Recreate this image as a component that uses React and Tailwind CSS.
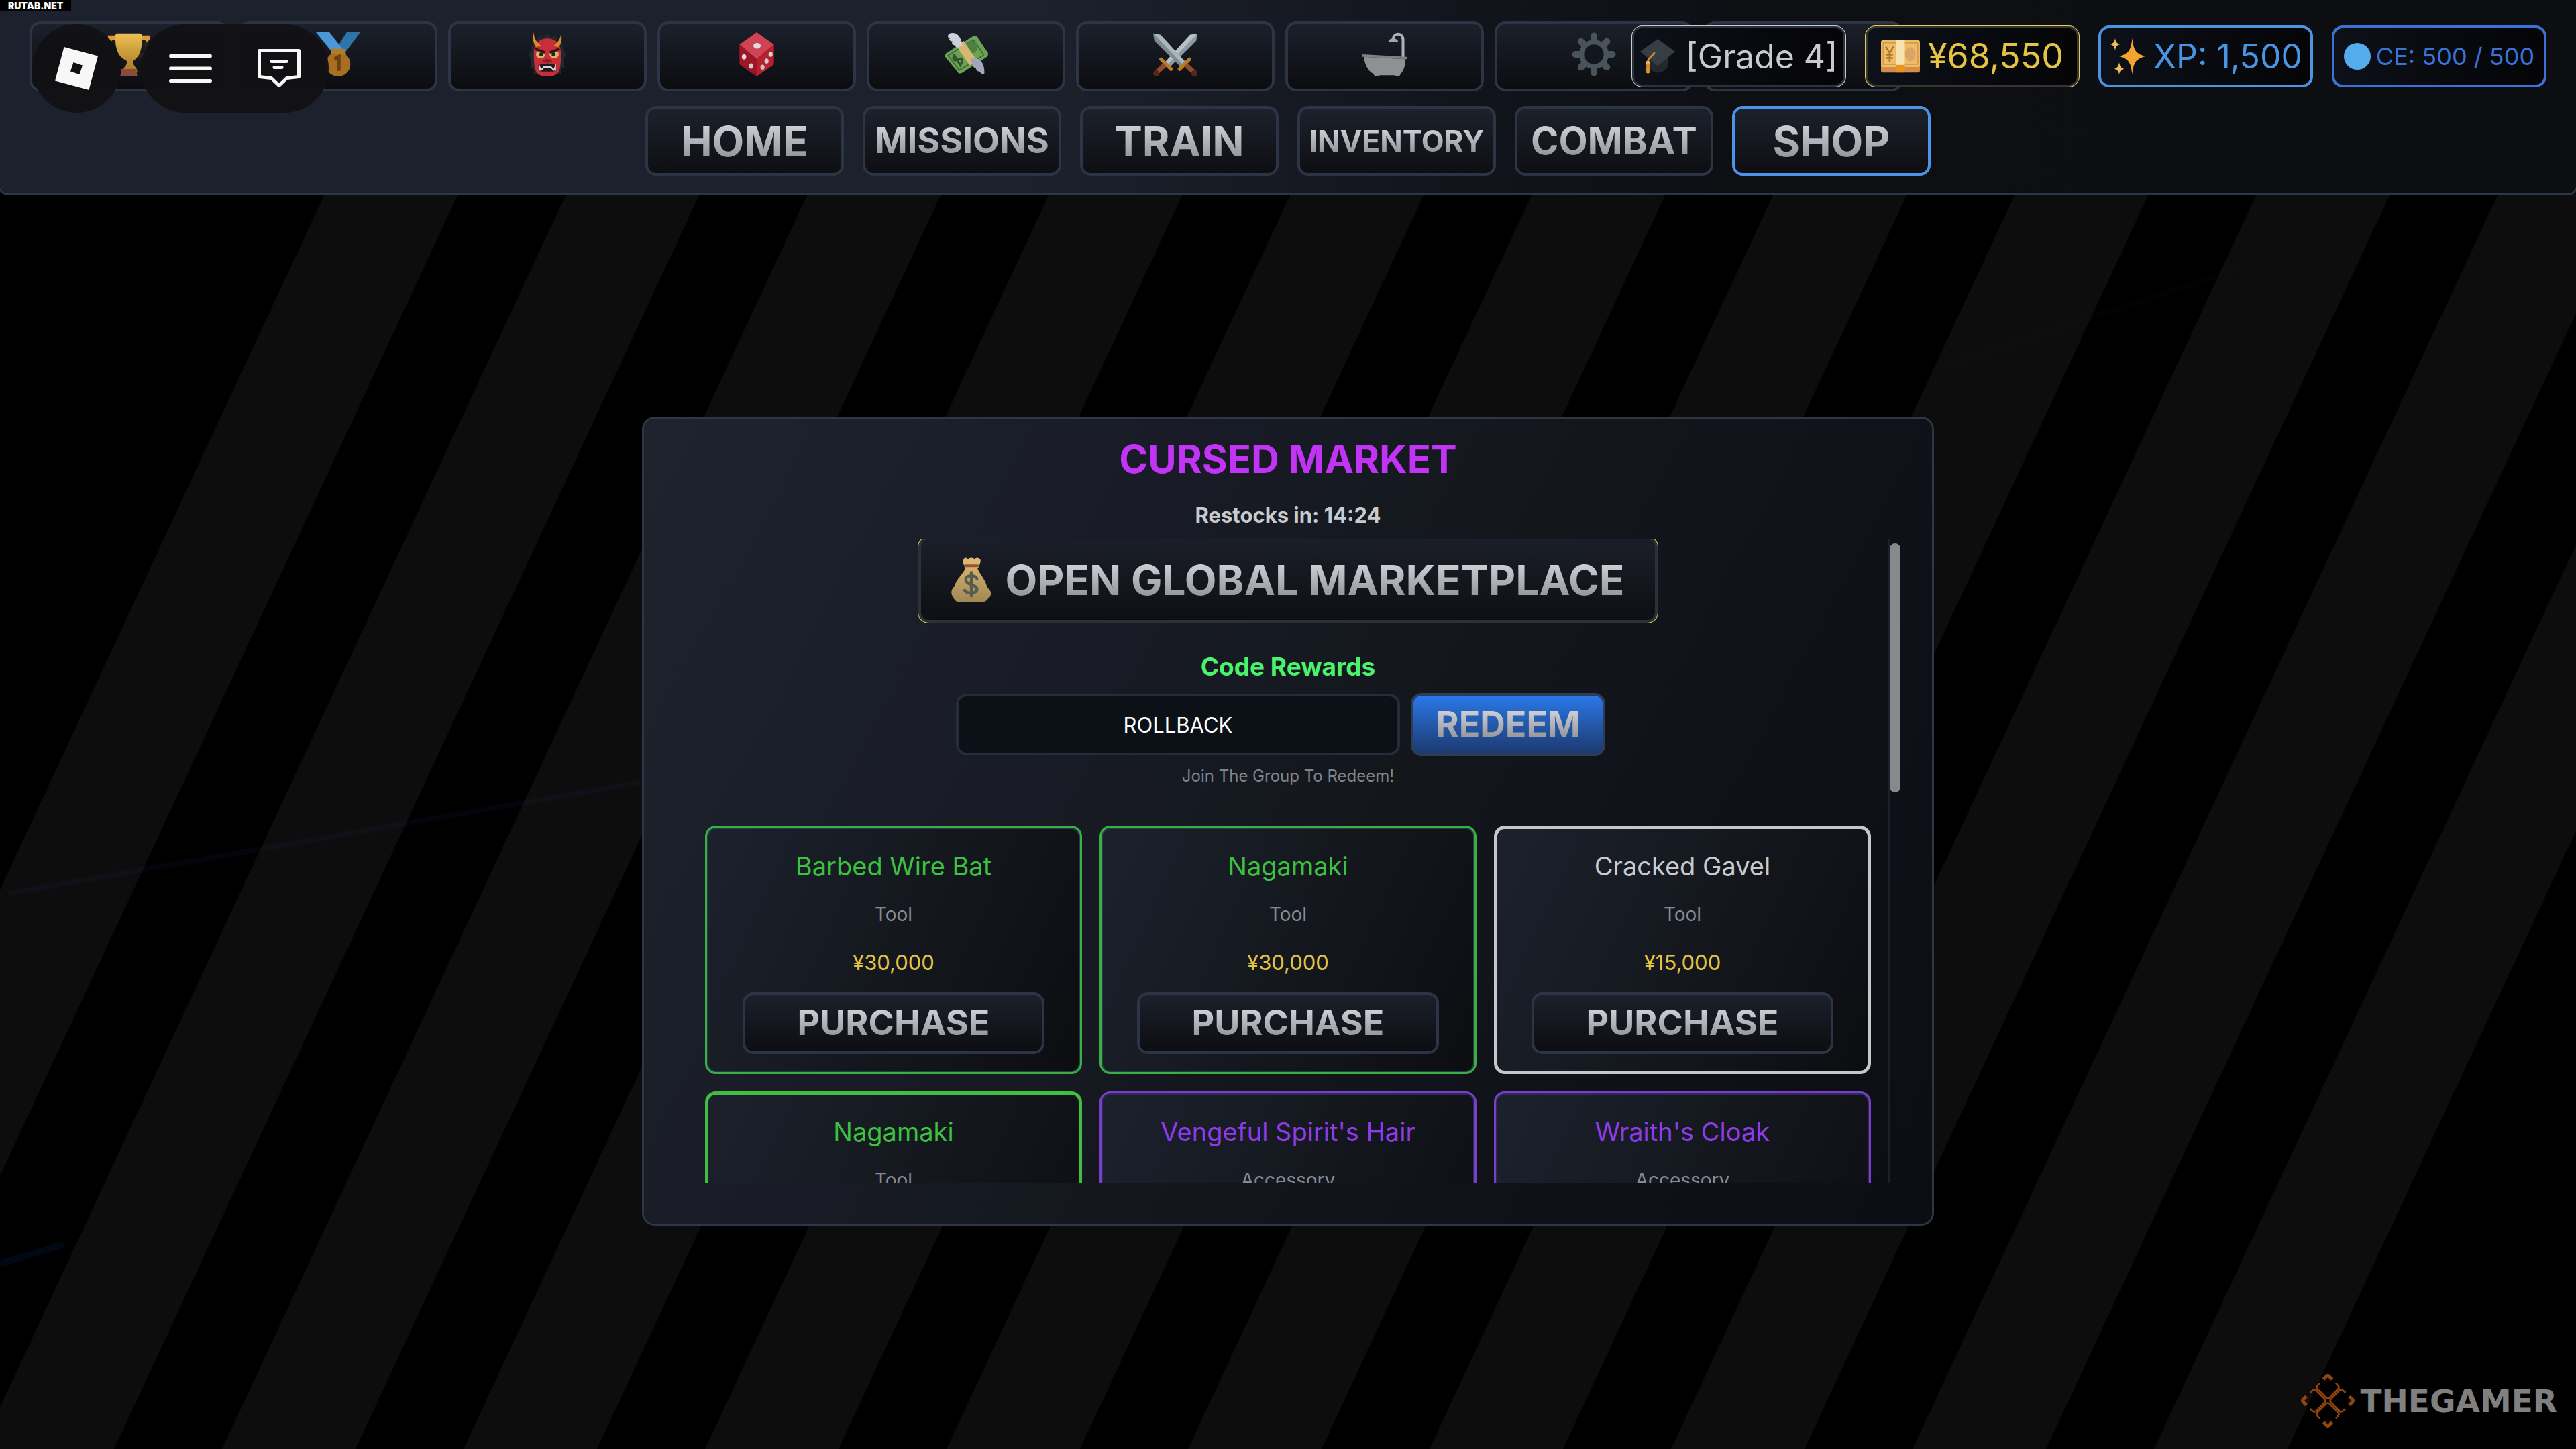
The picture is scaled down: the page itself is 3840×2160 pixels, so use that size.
import React from 'react';

const TrophyIcon = () => (
    <svg viewBox="0 0 36 36" className="w-[66px] h-[66px]">
        <path fill="#E39A35" d="M1 2.6h6l1 3.6H5L3 8 1 5.6zM35 2.6h-6l-1 3.6h3L33 8l2-2.4z" />
        <path fill="none" stroke="#2b2416" strokeWidth="2.4" d="M4 8c-1 7 1 10 6 12M32 8c1 7-1 10-6 12" />
        <path fill="url(#trophyCup)" d="M9 1h18c1 0 2 1 2 2 0 10-2 17-7 20-1 2 0 4 2 6l1 3H13l1-3c2-2 3-4 2-6C9 20 7 13 7 3c0-1 1-2 2-2z" />
        <path fill="#8a4a3c" d="M12 30h12l1 6H11z" />
        <defs>
            <linearGradient id="trophyCup" x1="0" y1="0" x2="0" y2="1">
                <stop offset="0" stopColor="#edc052" />
                <stop offset="1" stopColor="#a87923" />
            </linearGradient>
        </defs>
    </svg>
);

const MedalIcon = () => (
    <svg viewBox="0 0 36 36" className="w-[66px] h-[66px]">
        <path fill="#2e73aa" d="M36 0H25l-9 14 6 5z" />
        <path fill="#4b97d8" d="M0 0h11l14 18-8 3z" />
        <circle cx="18" cy="26" r="10" fill="#a86f22" />
        <path fill="#b47a25" d="M12 13.500h12v4H12z" />
        <path fill="none" stroke="#69400f" strokeWidth="3" d="M15 22l3.500-2v11.500" />
    </svg>
);

const OgreIcon = () => (
    <svg viewBox="0 0 36 36" className="w-[66px] h-[66px]">
        <path fill="#23262b" d="M18 1l3 3 4-1 1 4 4 2 1 5 2 4-2 5 1 5-3 2v4H7v-4l-3-2 1-5-2-5 2-4 1-5 4-2 1-4 4 1z" />
        <path fill="#c62f3a" d="M18 5c7 0 11 5 11 12 0 5 0 9-1 13s-4 6-10 6-9-2-10-6-1-8-1-13C7 10 11 5 18 5z" />
        <path fill="#dc8c24" d="M7 0c0 4 1 7 6 11l-4 1C6 9 6 4 7 0zM29 0c0 4-1 7-6 11l4 1c3-3 3-8 2-12z" />
        <ellipse cx="12.500" cy="18" rx="3.800" ry="3.200" fill="#d9b95c" />
        <ellipse cx="23.500" cy="18" rx="3.800" ry="3.200" fill="#d9b95c" />
        <circle cx="13" cy="18" r="1.600" fill="#22252a" />
        <circle cx="23" cy="18" r="1.600" fill="#22252a" />
        <path fill="none" stroke="#3a1118" strokeWidth="2" d="M8 13.500l8 3M28 13.500l-8 3" />
        <path fill="#8d1c27" d="M14 24c1-3 7-3 8 0l-4 1z" />
        <path fill="#24171b" d="M10.500 27c5-2 10-2 15 0l-2 5h-11z" />
        <path fill="#d5d8da" d="M11 25.500l2 4.500 2-2.500h6l2 2.500 2-4.500v5l-2 1-2-2h-6l-2 2-2-1z" />
    </svg>
);

const DiceIcon = () => (
    <svg viewBox="0 0 36 36" className="w-[66px] h-[66px]">
        <path fill="#cf4354" d="M18 0l14 10-14 12L4 10z" />
        <path fill="#9c1626" d="M4 10l14 12v14L5 27c-1-1-1-1-1-2z" />
        <path fill="#b8202f" d="M32 10L18 22v14l13-9c1-1 1-1 1-2z" />
        <ellipse cx="18.300" cy="11" rx="3" ry="2.300" fill="#e3dcde" />
        <ellipse cx="7.700" cy="20" rx="1.800" ry="2.200" fill="#e0d8da" />
        <ellipse cx="13.500" cy="27.500" rx="1.800" ry="2.200" fill="#d3cacc" />
        <ellipse cx="29.300" cy="18" rx="1.700" ry="2.100" fill="#d9d0d2" />
        <ellipse cx="26" cy="23.500" rx="1.700" ry="2.100" fill="#d3cacc" />
        <ellipse cx="22.700" cy="28.500" rx="1.700" ry="2.100" fill="#c9bfc1" />
    </svg>
);

const FlyingMoneyIcon = () => (
    <svg viewBox="0 0 36 36" className="w-[66px] h-[66px]">
        <path fill="#6ba254" d="M24 3c2-1 3 0 4 2l8 12c0 1 0 2-1 3L15 33c-2 1-3 1-4-1L1 20c-1-1 0-2 1-3z" />
        <path fill="none" stroke="#3f6a38" strokeWidth="1" d="M24 6l8.500 12.500M24 6L3.500 19l9 12 20-12.500" />
        <ellipse cx="23" cy="12" rx="4.500" ry="5" fill="#4b8244" />
        <path fill="none" stroke="#31552f" strokeWidth="1.800" d="M9 18c-3 4 0 6 3 4s4 2 1 5M8 18l6 10" />
        <path fill="#d6b772" d="M10 11l6-4 11 16-6 4z" />
        <path fill="#ccd0dc" d="M7 .5c4 0 7 3 8 10l-4 2c-1 0-2-1-2-2-2 0-3-1-2-3C4 7 4 5 5 5 2 4 3 .5 7 .5z" />
        <path fill="#a2a7b8" d="M23 21c6 0 10 3 10 12 0 2-3 1-4-1-2 0-3-2-3-3-2 0-3-2-2-3-2-1-3-4-1-5z" />
    </svg>
);

const SwordsIcon = () => (
    <svg viewBox="0 0 36 36" className="w-[66px] h-[66px]">
        <path fill="#8d9aa2" d="M36 1l-6 1L10 24l4 4L35 7z" />
        <path fill="#b5c1c6" d="M36 1l-6 1L10 24l2 2z" />
        <path fill="#7e8b93" d="M0 1l6 1 20 22-4 4L1 7z" />
        <path fill="#a9b6bc" d="M0 1l6 1 20 22-2 2z" />
        <path stroke="#b87a22" strokeWidth="3" strokeLinecap="round" d="M6.500 22l8 8M29.500 22l-8 8" />
        <path stroke="#8c4d2e" strokeWidth="4" d="M9.500 26.500l-7 6.500M26.500 26.500l7 6.500" />
        <circle cx="2.500" cy="33.500" r="2.500" fill="#55261a" />
        <circle cx="33.500" cy="33.500" r="2.500" fill="#55261a" />
    </svg>
);

const BathIcon = () => (
    <svg viewBox="0 0 36 36" className="w-[66px] h-[66px]">
        <path fill="none" stroke="#aeb2b8" strokeWidth="2.200" d="M33 21V6c0-6-8-6-8 0" />
        <path fill="#9fa5ab" d="M21 8c0-4 8-4 8 0z" />
        <path fill="#7d8184" d="M0 18l36 2v2L0 20z" />
        <path fill="#8d9194" d="M1 20l34 2c0 6-2 10-4 12l-1 2h-3l-1-1H14l-1 1h-3l-1-2c-5-3-7-8-8-14z" />
    </svg>
);

const GearIcon = () => (
    <svg viewBox="0 0 36 36" className="w-[66px] h-[66px]">
        <g stroke="#48535a" strokeWidth="5.500" strokeLinecap="round">
            <path d="M18 3v30M3 18h30M7.500 7.500l21 21M28.500 7.500l-21 21" />
        </g>
        <circle cx="18" cy="18" r="12" fill="#48535a" />
        <circle cx="18" cy="18" r="8" fill="#12161d" />
    </svg>
);

const GradCapIcon = () => (
    <svg viewBox="0 0 36 36" className="w-[52px] h-[52px] shrink-0">
        <path fill="#22282c" d="M8 14h21v12c0 5-6 9-11 9S8 31 8 26z" />
        <path fill="#373e43" d="M18 0l18 13-18 15L0 13z" />
        <path fill="none" stroke="#dc8d2a" strokeWidth="1.800" d="M15 14L8 22v5" />
        <circle cx="8" cy="25" r="2.400" fill="#e8b25c" />
        <path fill="#dc8d2a" d="M6.500 26h3L10 35l-2 1-2-1z" />
    </svg>
);

const YenIcon = () => (
    <svg viewBox="0 0 36 36" className="w-[58px] h-[58px] shrink-0">
        <path fill="#d68c49" d="M0 26h36v5a2 2 0 0 1-2 2H2a2 2 0 0 1-2-2z" />
        <rect y="3" width="36" height="25" rx="2" fill="#efbc68" />
        <rect x="2" y="5.500" width="32" height="20" fill="none" stroke="#d39b4e" strokeWidth="1" />
        <ellipse cx="27" cy="16" rx="5" ry="6.500" fill="#dba366" />
        <path fill="none" stroke="#a9762f" strokeWidth="1.500" d="M4.500 9L8 15l3.500-6M8 15v8M5 16.500h6M5 19.500h6" />
        <path fill="#f7e3b0" d="M14 3h8v23h-8z" />
        <path fill="#ec9420" d="M14 26h8v7h-8z" />
    </svg>
);

const SparklesIcon = () => (
    <svg viewBox="0 0 36 36" className="w-[54px] h-[54px] shrink-0">
        <path fill="#f5a52f" d="M23 0c1.500 12 3 15 13 18-10 3-11.500 6-13 18-1.500-12-3-15-13-18 10-3 11.500-6 13-18z" />
        <path fill="#f2bb55" d="M6 0c.8 4 1.500 5 5 6-3.500 1-4.200 2-5 6-.8-4-1.500-5-5-6 3.500-1 4.200-2 5-6zM10 24c.8 4 1.500 5.500 5 6.500-3.500 1-4.200 2-5 5.500-.8-3.500-1.500-4.500-5-5.500 3.500-1 4.200-2.500 5-6.500z" />
    </svg>
);

const MoneyBagIcon = () => (
    <svg viewBox="0 0 36 40" className="w-[60px] h-[68px] shrink-0">
        <path fill="#dcb673" d="M11 2c1-2 3-2 4 0 1-2 5-2 6 0 1-2 3-2 5 0 1 2-1 5-2 8H13c-2-3-3-6-2-8z" />
        <path fill="url(#moneyBag)" d="M13 9h10c3 7 8 11 9 18 5 3 4 8 1 10-2 3-4 3-6 3H8c-3 0-5-1-6-4-3-3-2-8 1-10 1-6 7-10 10-17z" />
        <path stroke="#99512f" strokeWidth="2.400" strokeLinecap="round" d="M12.500 7.500h11" />
        <path fill="none" stroke="#565c50" strokeWidth="2.600" strokeLinecap="round" d="M23 19c-1-3-10-4-10 1s10 4 10 8.500-9 4.500-11 1M18 13.500v21" />
        <defs>
            <linearGradient id="moneyBag" x1="0" y1="0" x2="0" y2="1">
                <stop offset="0" stopColor="#d2af6c" />
                <stop offset="1" stopColor="#a28854" />
            </linearGradient>
        </defs>
    </svg>
);

const RobloxLogo = () => (
    <svg viewBox="0 0 64 64" className="w-[64px] h-[64px]">
        <path fill="#f7f7f8" fillRule="evenodd" d="M13.500 0L64 13.500 50.500 64 0 50.500zM27.500 23L23 36.500 36.500 41 41 27.500z" />
    </svg>
);

const MenuLinesIcon = () => (
    <svg viewBox="0 0 64 42" className="w-[64px] h-[42px]">
        <path stroke="#f7f7f8" strokeWidth="5" strokeLinecap="round" d="M2.500 2.500h59M2.500 21h59M2.500 39.500h59" />
    </svg>
);

const ChatIcon = () => (
    <svg viewBox="0 0 64 58" className="w-[64px] h-[58px]">
        <path fill="none" stroke="#f7f7f8" strokeWidth="5" strokeLinejoin="round" d="M2.500 2.500h59v39l-18 2L32 54.500 20.500 43.500l-18-2z" />
        <path stroke="#f7f7f8" strokeWidth="5" strokeLinecap="round" d="M21 18.500h22M25 27.500h11" />
    </svg>
);

const GamerLogo = () => (
    <svg viewBox="0 0 80 80" className="w-[80px] h-[80px]" fill="none" stroke="#93430f">
        {[0, 90, 180, 270].map((angle) => (
            <g key={angle} transform={`rotate(${angle} 40 40)`}>
                <path strokeWidth="5" d="M33.500 8L38 3.500q2-2 4 0L46.500 8" />
                <path strokeWidth="2.600" d="M28 13.500l-3.500 4q-2 3 0 5l13 13q2.500 2 5 0l13-13q2-2 0-5l-3.500-4" />
            </g>
        ))}
    </svg>
);

const quickLinks = [
    { label: 'Trophies', icon: TrophyIcon },
    { label: 'Rankings', icon: MedalIcon },
    { label: 'Curses', icon: OgreIcon },
    { label: 'Roll', icon: DiceIcon },
    { label: 'Trade', icon: FlyingMoneyIcon },
    { label: 'Battle', icon: SwordsIcon },
    { label: 'Bath', icon: BathIcon },
    { label: 'Settings', icon: GearIcon },
    { label: 'More', icon: null },
];

const tabs = [
    { label: 'HOME', size: 'text-[62px]' },
    { label: 'MISSIONS', size: 'text-[52px]' },
    { label: 'TRAIN', size: 'text-[62px]' },
    { label: 'INVENTORY', size: 'text-[44px]' },
    { label: 'COMBAT', size: 'text-[56px]' },
    { label: 'SHOP', size: 'text-[62px]', active: true },
];

const stats = [
    { text: '[Grade 4]', icon: <GradCapIcon />, style: 'gap-4 text-[50px] text-[#c9cacd] shadow-[inset_0_0_0_1px_#c9cacd,inset_0_0_0_4px_#2c313c]' },
    { text: '¥68,550', icon: <YenIcon />, style: 'gap-3 text-[52px] text-[#e6c443] shadow-[inset_0_0_0_1px_#e0cc62,inset_0_0_0_4px_#38362c]' },
    { text: 'XP: 1,500', icon: <SparklesIcon />, style: 'gap-3 text-[50px] text-[#4a94e2] shadow-[inset_0_0_0_4px_#4a94e2]' },
    { text: 'CE: 500 / 500', icon: <span className="w-10 h-10 shrink-0 rounded-full bg-[#55aced]" />, style: 'gap-2 text-[36px] text-[#3b72d6] shadow-[inset_0_0_0_4px_#3b72d6]' },
];

const green = { text: 'text-[#3cc23f]', frame: 'shadow-[inset_0_0_0_3px_#3cae45,inset_0_0_0_5px_#1f4144]' };
const greenSolid = { text: 'text-[#3cc23f]', frame: 'shadow-[inset_0_0_0_5px_#41bd41]' };
const white = { text: 'text-[#c9cacd]', frame: 'shadow-[inset_0_0_0_5px_#c6c7ca]' };
const purple = { text: 'text-[#8f3bea]', frame: 'shadow-[inset_0_0_0_3px_#7a3fc8,inset_0_0_0_5px_#30285a]' };

const items = [
    { id: 1, name: 'Barbed Wire Bat', type: 'Tool', price: '¥30,000', rarity: green },
    { id: 2, name: 'Nagamaki', type: 'Tool', price: '¥30,000', rarity: green },
    { id: 3, name: 'Cracked Gavel', type: 'Tool', price: '¥15,000', rarity: white },
    { id: 4, name: 'Nagamaki', type: 'Tool', rarity: greenSolid },
    { id: 5, name: "Vengeful Spirit's Hair", type: 'Accessory', rarity: purple },
    { id: 6, name: "Wraith's Cloak", type: 'Accessory', rarity: purple },
];

const ShinyText = ({ className = '', children }) => (
    <span className={`font-bold bg-linear-to-b from-[#d2d4da] from-20% to-[#8b8d92] to-85% bg-clip-text text-transparent ${className}`}>
        {children}
    </span>
);

const Backdrop = () => (
    <svg
        viewBox="0 0 3840 2160"
        preserveAspectRatio="xMidYMid slice"
        className="absolute inset-0 w-full h-full -z-10"
        aria-hidden="true"
    >
        <rect width="3840" height="2160" fill="#000" />
        {Array.from({ length: 11 }, (_, i) => (
            <path key={i} fill="#0d0d0d" d="M619 0h199L-190 2160h-199z" transform={`translate(${i * 360} 0)`} />
        ))}
        <path stroke="#2840a0" strokeOpacity="0.07" strokeWidth="8" d="M12 1332L960 1165" />
        <path stroke="#1440a0" strokeOpacity="0.12" strokeWidth="10" d="M0 1884l95-29" />
        <path stroke="#1440a0" strokeOpacity="0.03" strokeWidth="8" d="M2890 548l450-148" />
    </svg>
);

const Header = () => (
    <header className="relative h-72 pt-8 rounded-b-xl bg-[linear-gradient(95deg,#1d212d_0%,#1d212c_40%,#11141b_57%,#0d0f13_68%,#0d0e12_100%)] shadow-[0_0_0_3px_#2d3745]">
        <nav className="flex gap-4 pl-11">
            {quickLinks.map(({ label, icon: Icon }) => (
                <button
                    key={label}
                    aria-label={label}
                    className="flex items-center justify-center w-[296px] h-[104px] pb-1.5 shrink-0 rounded-2xl border-4 border-[#2c3445] bg-linear-to-b from-[#1b202b] to-[#0c0d10]"
                >
                    {Icon && <Icon />}
                </button>
            ))}
        </nav>

        <nav className="flex justify-center gap-7 mt-[22px]">
            {tabs.map((tab) => (
                <button
                    key={tab.label}
                    className={`flex items-center justify-center w-[296px] h-[104px] rounded-2xl border-4 bg-linear-to-b from-[#1c212c] to-[#0e0f13] ${tab.active ? 'border-[#4d94e8]' : 'border-[#2c3445]'}`}
                >
                    <ShinyText className={tab.size}>{tab.label}</ShinyText>
                </button>
            ))}
        </nav>

        <div className="absolute top-[38px] right-11 flex gap-7">
            {stats.map((stat) => (
                <div
                    key={stat.text}
                    className={`flex items-center justify-center w-[320px] h-[92px] rounded-2xl whitespace-nowrap bg-linear-to-r from-[#0d1119] to-[#050507] ${stat.style}`}
                >
                    {stat.icon}
                    <span>{stat.text}</span>
                </div>
            ))}
        </div>

        <div className="absolute top-9 left-12 flex gap-[30px]">
            <button aria-label="Roblox" className="flex items-center justify-center w-[132px] h-[132px] rounded-full bg-[#121215]/97">
                <RobloxLogo />
            </button>
            <div className="flex px-2 rounded-full bg-[#121215]/97">
                <button aria-label="Menu" className="flex items-center justify-center w-[132px] h-[132px]">
                    <MenuLinesIcon />
                </button>
                <button aria-label="Chat" className="flex items-center justify-center w-[132px] h-[132px]">
                    <ChatIcon />
                </button>
            </div>
        </div>

        <span className="absolute top-0 left-0 px-3 bg-black text-sm leading-[17px] font-black text-white">RUTAB.NET</span>
    </header>
);

const ItemCard = ({ item }) => (
    <article
        className={`flex flex-col items-center h-[370px] pt-9 rounded-2xl bg-[linear-gradient(115deg,#1d212d_0%,#14181e_50%,#0c0d11_100%)] ${item.rarity.frame}`}
    >
        <h3 className={`text-[38px] leading-[48px] ${item.rarity.text}`}>{item.name}</h3>
        <p className="mt-7 text-[28px] leading-10 text-[#868a93]">{item.type}</p>
        {item.price && (
            <>
                <p className="mt-8 text-[31px] leading-10 text-[#e6c443]">{item.price}</p>
                <button className="flex items-center justify-center w-4/5 h-[92px] mt-6 shrink-0 rounded-2xl border-4 border-[#2c3445] bg-linear-to-b from-[#1c202c] to-[#0d0e12]">
                    <ShinyText className="text-[52px]">PURCHASE</ShinyText>
                </button>
            </>
        )}
    </article>
);

const Market = () => (
    <section className="w-1/2 pt-6 pb-[60px] rounded-2xl text-center bg-[linear-gradient(118deg,#1e232e_0%,#191c27_30%,#13171c_55%,#0e1118_78%,#0c0e13_100%)] shadow-[0_0_0_3px_#2d3745]">
        <h1 className="text-[58px] leading-[72px] font-bold text-[#c234f5]">CURSED MARKET</h1>
        <p className="mt-7 text-[31px] leading-10 font-bold text-[#c8cacd]">Restocks in: 14:24</p>

        <div className="relative h-[960px] mt-4 mx-[45px] px-[46px] overflow-hidden">
            <button className="flex items-center justify-center gap-5 w-[1104px] h-[130px] -mt-[5px] mx-auto rounded-2xl bg-linear-to-b from-[#1b1f2a] to-[#0e0f13] shadow-[inset_0_0_0_1px_#d8c95f,inset_0_0_0_5px_#2c3039]">
                <MoneyBagIcon />
                <ShinyText className="text-[62px]">OPEN GLOBAL MARKETPLACE</ShinyText>
            </button>

            <label htmlFor="code" className="block mt-[42px] text-[37px] leading-[46px] font-bold text-[#4bf26c]">
                Code Rewards
            </label>
            <div className="flex items-center gap-4 w-[990px] mt-4 mx-auto">
                <input
                    id="code"
                    type="text"
                    defaultValue="ROLLBACK"
                    className="w-[662px] h-[92px] rounded-2xl border-4 border-[#252d3b] bg-[#0c1118] text-center text-[31px] text-white"
                />
                <button className="flex items-center justify-center w-[290px] h-[94px] rounded-2xl border-4 border-[#2d3c58] bg-linear-to-b from-[#2b79ea] to-[#1b3a70]">
                    <ShinyText className="text-[52px]">REDEEM</ShinyText>
                </button>
            </div>
            <p className="mt-3.5 text-[24px] leading-8 text-[#7f848d]">Join The Group To Redeem!</p>

            <div className="grid grid-cols-3 gap-[26px] mt-[58px]">
                {items.map((item) => (
                    <ItemCard key={item.id} item={item} />
                ))}
            </div>

            <div className="absolute inset-y-0 right-0 w-5 pt-1.5 border-l-2 border-[#1a212b]">
                <div className="w-4 h-[371px] rounded-full bg-[#868a8c]" />
            </div>
        </div>
    </section>
);

export default function App() {
    return (
        <div className="relative isolate flex flex-col min-h-screen overflow-hidden font-['Inter',sans-serif] font-normal">
            <Backdrop />
            <Header />
            <main className="flex flex-1 items-center justify-center">
                <Market />
            </main>
            <div className="absolute right-7 bottom-8 flex items-center gap-2">
                <GamerLogo />
                <span className="font-['DejaVu_Sans',sans-serif] text-[47px] leading-none font-bold text-[#808080]">THEGAMER</span>
            </div>
        </div>
    );
}
